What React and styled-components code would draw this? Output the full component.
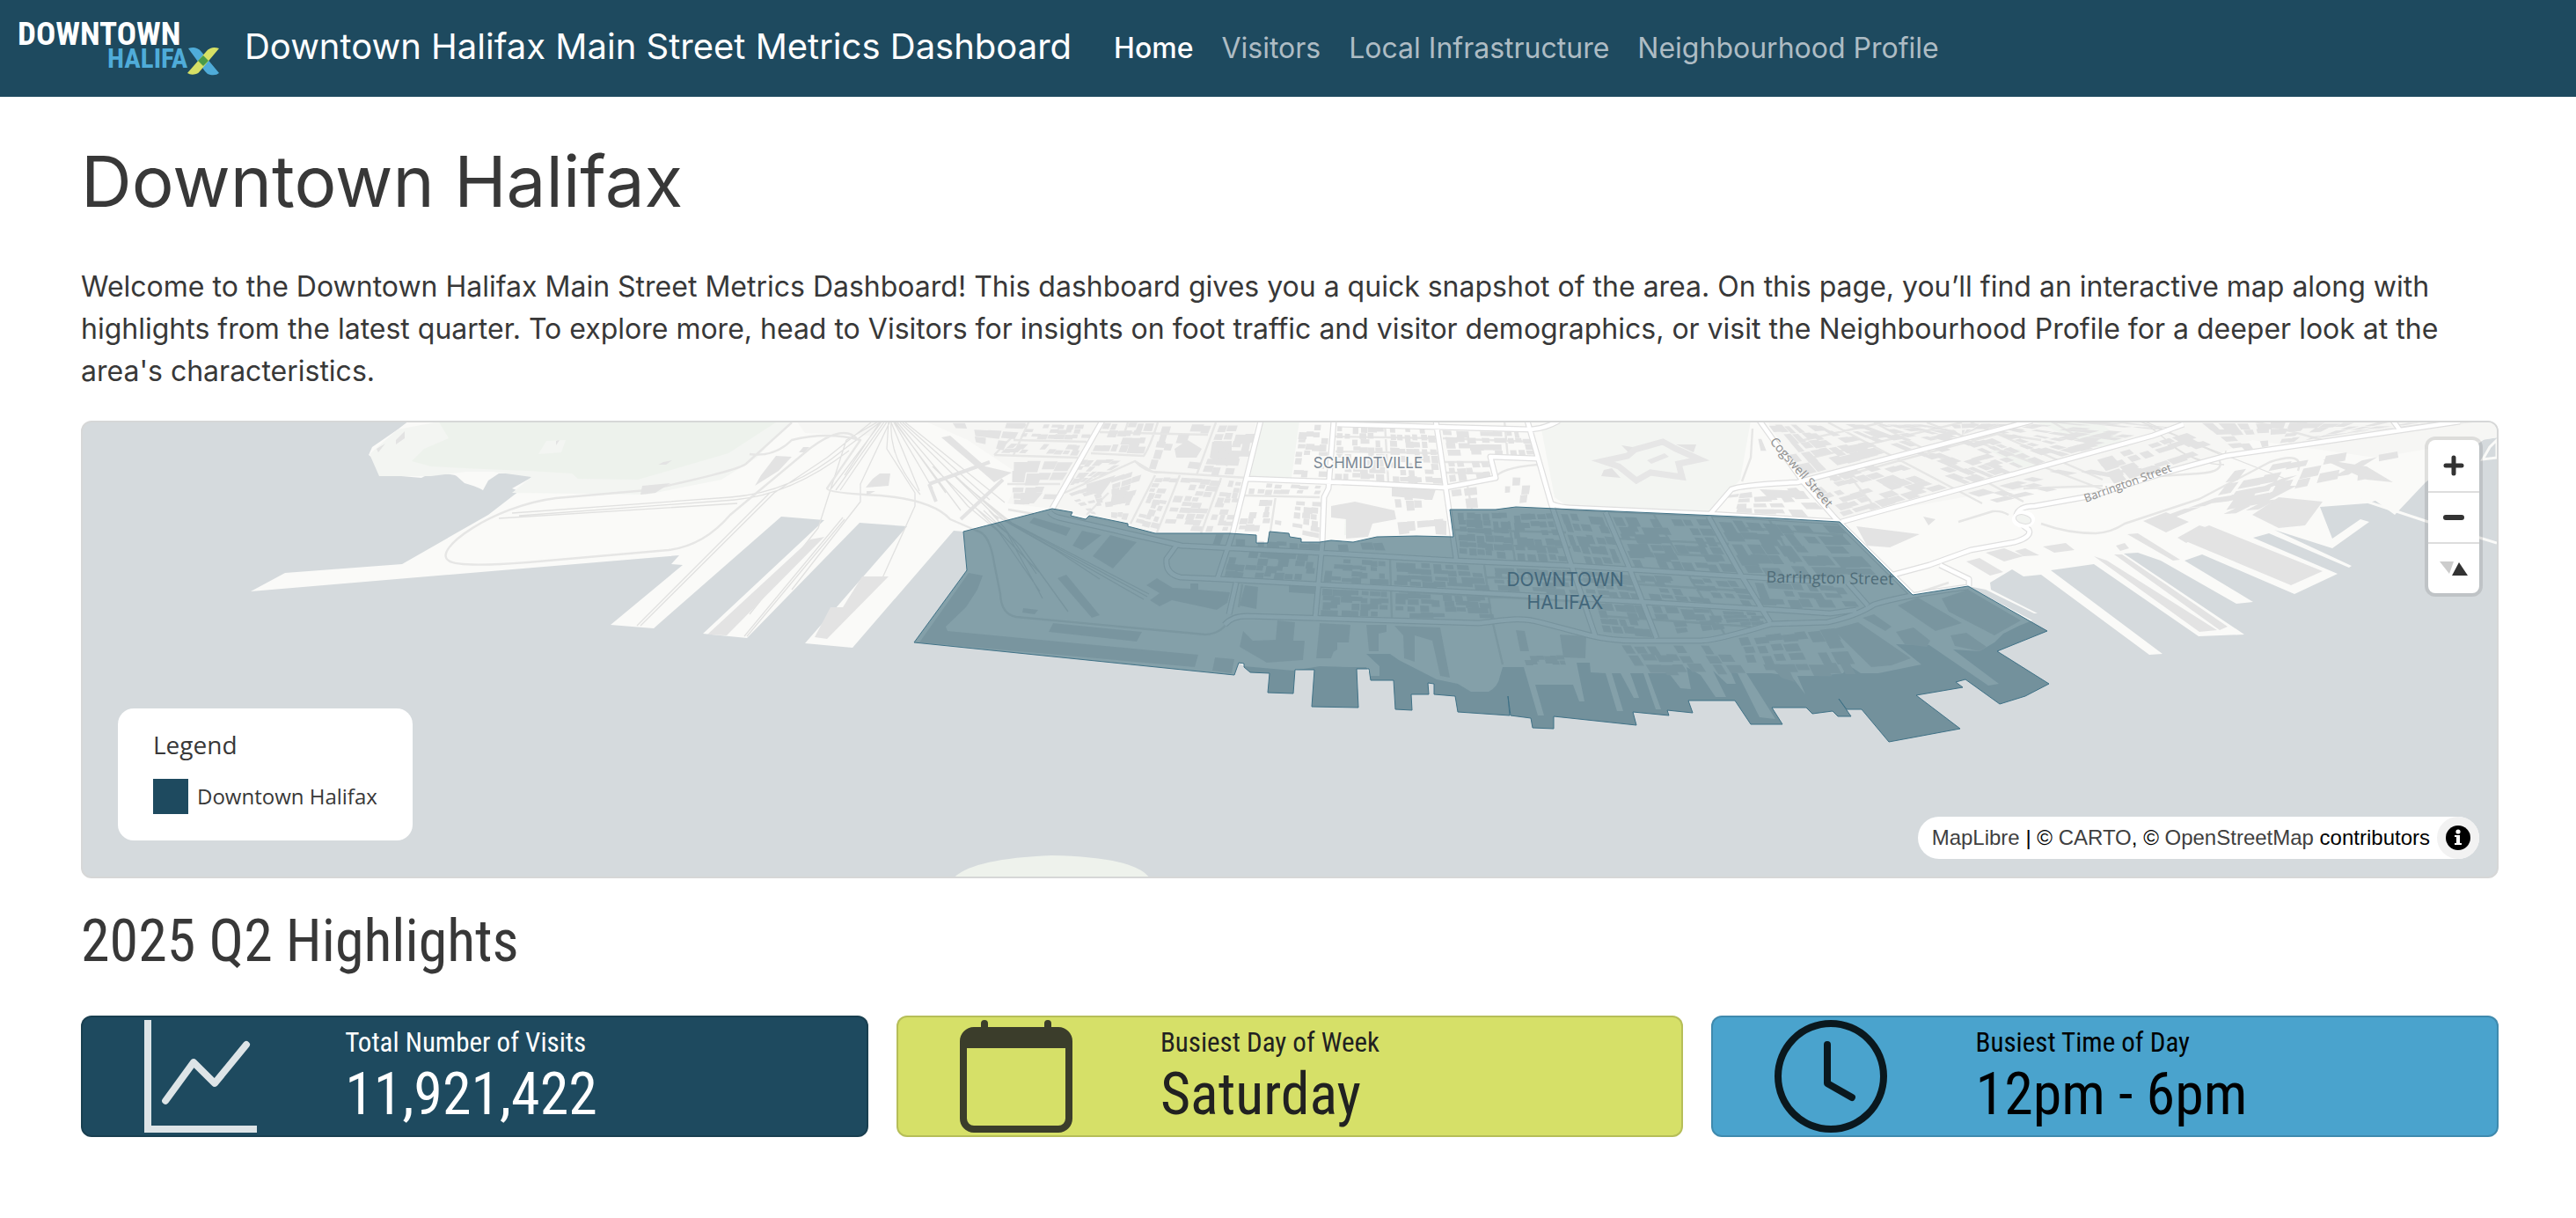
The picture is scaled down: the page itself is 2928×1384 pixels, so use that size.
import React from 'react';
import styled, { createGlobalStyle } from 'styled-components';
import { BsGraphUp, BsCalendar, BsClock } from 'react-icons/bs';

const GlobalStyle = createGlobalStyle`
  * {
    box-sizing: border-box;
  }
  body {
    margin: 0;
    background-color: #fff;
    color: #383838;
    font-family: Inter, sans-serif;
    font-size: 32px;
    line-height: 48px;
  }
`;

const Navbar = styled.header`
  display: flex;
  align-items: center;
  height: 110px;
  padding: 0 20px;
  background-color: #1e4a5f;
`;
const LogoLink = styled.a`
  display: flex;
  margin-right: 28px;
`;
const Brand = styled.a`
  margin-right: 48px;
  padding-bottom: 4px;
  color: #fff;
  font-size: 40px;
  text-decoration: none;
  white-space: nowrap;
`;
const NavLinks = styled.nav`
  display: flex;
  gap: 32px;
`;
const NavLink = styled.a`
  color: ${props => (props.$active ? '#fff' : '#aebcc4')};
  font-weight: ${props => (props.$active ? 500 : 400)};
  text-decoration: none;
  white-space: nowrap;
`;

const Page = styled.main`
  padding: 0 88px 0 92px;
`;
const Title = styled.h1`
  margin: 0;
  padding: 48px 0;
  font-size: 80px;
  font-weight: 400;
  line-height: 96px;
`;
const Intro = styled.p`
  margin: 0 0 32px;
`;
const IntroLink = styled.a`
  color: inherit;
  text-decoration: none;
`;

const MapFrame = styled.section`
  position: relative;
  height: 520px;
  overflow: hidden;
  border: 2px solid #d6d7d7;
  border-radius: 12px;
  background-color: #d5dadd;
`;
const MapCanvas = styled.svg`
  display: block;
  width: 100%;
  height: 100%;
`;
const Legend = styled.div`
  position: absolute;
  left: 40px;
  bottom: 41px;
  padding: 22px 40px 30px;
  border-radius: 18px;
  background-color: #fff;
  font-family: 'Open Sans', sans-serif;
`;
const LegendTitle = styled.div`
  margin-bottom: 20px;
  font-size: 28px;
  line-height: 38px;
`;
const LegendItem = styled.div`
  display: flex;
  align-items: center;
  gap: 10px;
  font-size: 24px;
  line-height: 40px;
`;
const Swatch = styled.span`
  width: 40px;
  height: 40px;
  background-color: #1e4a5f;
`;
const MapControls = styled.div`
  position: absolute;
  top: 20px;
  right: 20px;
  overflow: hidden;
  border-radius: 8px;
  background-color: #fff;
  box-shadow: 0 0 0 4px rgba(0, 0, 0, 0.1);
`;
const MapButton = styled.button`
  display: flex;
  align-items: center;
  justify-content: center;
  width: 58px;
  height: 58px;
  padding: 0;
  border: 0;
  background: none;
  & + & {
    border-top: 2px solid #ddd;
  }
`;
const Attribution = styled.div`
  position: absolute;
  right: 20px;
  bottom: 20px;
  display: flex;
  align-items: center;
  gap: 8px;
  height: 48px;
  padding-left: 16px;
  border-radius: 24px;
  background-color: #fff;
  color: #000;
  font-family: 'Liberation Sans', sans-serif;
  font-size: 24px;
  line-height: 40px;
`;
const AttributionLink = styled.a`
  color: #404040;
  text-decoration: none;
`;
const InfoButton = styled.button`
  display: flex;
  align-items: center;
  justify-content: center;
  width: 48px;
  height: 48px;
  padding: 0;
  border: 0;
  border-radius: 24px;
  background-color: #f2f2f2;
`;

const SectionTitle = styled.h2`
  margin: 0;
  padding: 32px 0 44px;
  font-family: 'Roboto Condensed', Roboto, sans-serif;
  font-size: 66px;
  font-weight: 400;
  line-height: 80px;
`;
const Cards = styled.section`
  display: grid;
  grid-template-columns: repeat(3, 1fr);
  gap: 32px;
  padding-bottom: 88px;
`;
const Card = styled.article`
  display: grid;
  grid-template-columns: 1fr 2fr;
  column-gap: 2px;
  align-items: center;
  height: 138px;
  border: 2px solid rgba(0, 0, 0, 0.15);
  border-radius: 12px;
  background-color: ${props => props.$bg};
  color: ${props => props.$color};
  font-family: 'Roboto Condensed', Roboto, sans-serif;
`;
const CardIcon = styled.div`
  display: flex;
  padding-left: 70px;
  opacity: 0.85;
`;
const CardLabel = styled.div`
  font-size: 31px;
  line-height: 42px;
`;
const CardValue = styled.div`
  font-size: 66px;
  line-height: 76px;
`;

// ---- map data ----

const LAND =
  'M465 478L452 488L423 508L419 517L431 526V541L456 541L479 543Q485 539 497 539Q514 538 519 541L528 549Q540 552 549 557L555 546L567 538H597L605 542L582 555L590 558L555 585L457 641L324 651L285 672L772 631L763 641L776 642L694 710L743 714L888 587L937 591L799 720L849 725L977 594L1031 598L915 731L969 736L1084 603L1095 604L1099 648L1039 730L1403 767L1408 753L1414 757L1470 762L1500 757L1533 758L1553 758L1558 768L1568 768V757L1553 743H1580L1590 750L1633 772L1657 777L1672 786H1692Q1703 780 1705 768L1708 758H1732L1748 813H1755L1745 778H1788L1795 797H1801L1792 753H1807L1808 764L1825 765L1838 808H1845L1832 765H1842L1857 793H1863L1853 765H1868L1882 806H1888L1873 765H1897L1910 782L1922 783L1917 758L1933 767L1950 792H1962L1947 762L1963 777H1973L1967 763L1975 765L2000 815L2018 817L1985 765L2013 765L2036 768L2052 789L2043 768L2067 768L2095 765L2100 755L2115 765H2135L2184 755L2155 732L2193 733L2260 779L2272 777L2220 738L2250 740L2267 730L2277 720L2295 711L2310 705L2237 666L2257 670L2312 697H2316L2263 670L2262 662L2287 647L2300 655L2320 653L2443 744L2458 743L2331 648L2380 641L2499 723L2551 721L2414 629L2430 628L2456 637L2542 686L2561 684L2483 637L2503 630L2608 675L2657 652L2561 611L2579 606L2670 645L2673 643L2585 602L2651 623L2693 593L2683 590L2651 612L2637 576L2690 572L2700 569L2722 585L2757 548L2824 499L2840 497V478Z';

const DISTRICT =
  'M1095 604L1196 578L1219 582L1217 586L1234 590L1238 586L1282 595V598L1313 606H1398L1428 608V617H1441L1443 604L1465 606L1466 610L1479 612V616H1500L1513 614L1538 616L1565 610L1610 609L1652 610L1648 579H1700L1723 576L2020 589L2091 593L2174 676L2237 666L2327 717L2270 740L2329 777L2302 791L2273 800L2234 772L2223 775L2231 781L2178 790L2228 828L2147 843L2116 806H2099L2090 794L2104 814H2089L2083 808L2060 811L2053 804H2014L2026 823H1990L1972 796H1919L1924 810L1895 807L1897 813L1856 809L1860 824L1766 814V828L1742 827L1740 816L1717 813L1714 791L1716 813L1657 809L1654 791L1630 789V777L1623 776L1624 789H1604L1605 807L1586 806L1584 773H1558L1556 760H1542L1544 804L1491 803L1494 761H1472L1470 788L1441 787L1443 765L1421 764L1414 758V754L1408 753L1403 767L1039 730L1099 648Z';

const RESIDENTIAL = [
  'M1020 480L1130 478H1428L1400 606H1313L1196 578L1145 572L1160 540L1100 500L1050 478Z',
  'M2010 480H2840V497L2700 520L2560 500L2450 545L2260 560L2090 590L2050 548Z',
  'M905 478H1000L990 495L915 492Z',
];
const PARKS = [
  { d: 'M505 478H900L860 520L820 545L735 562L582 560L604 542L560 536H530L490 541L431 541L420 516L452 488Z', fill: '#f3f5f2' },
  { d: 'M498 478H885L828 515L725 545L657 544L650 538L600 535L550 533L490 530L468 524L482 510L510 498Z', fill: '#edf2ec' },
  { d: 'M621 501L643 500L638 514L612 516Z', fill: '#f3f5f2' },
  { d: 'M1752 488L1780 478H1990L1978 545L1942 583L1783 576L1767 565Z', fill: '#f3f5f2' },
  { d: 'M1434 478H1477L1468 543H1420Z', fill: '#f2f5f1' },
  { d: 'M1529 587H1553L1553 608H1528Z', fill: '#f2f5f1' },
  { d: 'M2310 478H2385L2420 508H2380Z', fill: '#f1f4f0' },
  { d: 'M2262 512L2295 510L2318 528L2296 532Z', fill: '#f1f4f0' },
  { d: 'M1082 1000Q1100 976 1195 972Q1295 974 1308 1000Z', fill: '#eef2ec' },
];

const MAJOR_ROADS = [
  'M1253 478L1196 578',
  'M1433 478L1401 606L1384 657',
  'M1516 478L1510 555L1505 565L1503 617L1495 702',
  'M1632 478L1643 552L1655 635',
  'M1736 478L1763 572L1787 645L1813 722',
  'M1418 544L1550 549L1643 554L1700 543L1694 519L1747 521',
  'M1520 482L1740 488Q1756 487 1772 478',
  'M1763 572Q1770 576 1785 577L1942 584L2091 593',
  'M1193 582Q1196 586 1203 588L1330 617L1343 620L1500 628L1653 637L1790 643L1980 655L2070 661',
  'M1337 620L1326 635Q1324 652 1342 656L1387 658L1497 664L1707 675L1867 684L2020 693L2080 697L2110 693',
  'M1392 710Q1400 700 1417 700L1550 704L1680 708C1705 706 1725 700 1750 707L1807 722Q1830 728 1860 728H1933Q1950 728 2013 709L2077 707Q2110 700 2130 687Q2160 677 2237 667',
  'M1405 662L1397 698',
  'M1825 582L1853 648L1883 725',
  'M1942 587L1980 655L2012 707',
  'M2100 662L2123 688',
  'M2000 478L2050 548L2087 590L2175 677',
  'M1943 585L1968 556Q1978 551 2043 548L2310 478',
  'M2093 593L2230 555L2447 495L2482 482',
  'M2152 653L2193 642L2240 625L2290 616Q2310 610 2306 602Q2295 595 2292 585Q2295 575 2313 575L2380 563L2457 538L2530 518L2640 502L2796 479',
  'M2205 642L2238 658V666',
  'M2720 478L2728 489',
];
const MINOR_ROADS = [
  'M1152 517L1170 478M1130 517L1225 520M1152 500L1235 502M1130 517L1152 495M1250 491L1373 494M1240 515L1300 518Q1306 510 1316 480M1210 560L1290 524L1310 536L1418 543M1290 524Q1300 535 1315 537M1360 540L1382 480M1313 540L1285 595M1341 540L1315 605M1388 543L1365 606M1282 480L1278 492M1415 563L1500 565M1450 564L1444 604M1145 550H1205M1146 579L1175 584M1235 585L1260 560',
  'M1518 496L1634 498M1574 480L1578 548M1518 513L1636 515M1640 525L1694 525M1710 478L1714 521M1640 537L1694 538M1668 552L1673 578M1700 543Q1704 532 1747 528M1640 498L1742 502',
  'M1412 664L1408 690M1580 635L1582 702M1687 642L1695 700L1708 755M1715 592L1722 637M1652 602L1780 605M1718 620L1785 622M1880 585L1907 630L1950 632M1920 655L1960 720M1838 612L1965 618M1690 656L1870 661M1800 660L1990 672M1590 672L1800 684M1822 700L1990 712M1985 600L2095 608M2010 589L2040 640',
  'M1992 487L1990 520L1980 547M2050 500L2140 480M2060 520L2230 480M2130 480L2300 570M2190 480L2400 560M2078 480L2253 572M2100 538L2130 575M2080 545L2270 493L2320 500M2240 480L2390 545M2300 555L2390 552M2330 478L2360 495',
  'M2226 593L2265 581Q2275 580 2283 585M2320 595Q2350 606 2382 606Q2400 605 2415 595L2500 567L2580 525Q2620 512 2612 535M2560 478L2640 500M2455 541L2500 538Q2530 536 2522 522M2176 675L2215 662',
  'M900 480L848 527Q838 535 735 557L632 566C560 575 490 625 510 637Q520 645 600 639L760 625Q800 620 830 585L920 510Q960 480 975 500',
  'M852 516Q880 520 900 500Q940 490 978 500L940 555Q940 560 1000 563Q1060 568 1080 590L1110 603Q1125 606 1130 640L1137 675Q1138 698 1155 701L1370 721Q1388 720 1396 706',
];
const TRACKS = [
  'M582 583L830 565Q900 560 960 510L1000 480M590 586L835 568Q900 562 965 512M567 589L838 572M728 711L880 560L940 520L990 480M724 711L875 560M849 723L960 590M846 723L958 588M852 698L930 600L962 500L1000 478',
  'M1003 478L945 555M1006 478L950 557M1009 478L955 557M1012 478L978 550V570L900 670M1000 480L960 540M1010 478L1008 510L1040 560V575L1002 659M1013 480Q1010 520 1046 562',
  'M1013 480L1045 558M1016 480L1060 555M1018 480L1075 560M1020 480L1100 575M1023 480L1135 590M1026 480L1125 568M1029 480L1142 571M1017 480L1092 580',
  'M1085 540L1140 590L1300 681M1090 545L1145 592L1304 678M1095 550L1150 594L1306 675M1100 575L1135 604L1182 672M1110 578L1145 606L1185 680M1118 580L1160 620L1214 695M1124 580L1142 600L1178 652M1130 585L1200 625L1250 658M1060 530L1112 580L1181 650',
  'M2430 478L2600 545M2436 478L2520 515Q2530 520 2530 512M2440 482L2475 510Q2500 528 2528 528M2464 498Q2470 515 2510 525',
];

const BUILDINGS =
  'M1101 651L1117 654L1111 670L1098 690L1075 712L1077 717L1362 744L1358 758L1045 730ZM1197 708L1298 718L1292 729L1192 718ZM1202 657L1212 653L1250 699L1241 702ZM1262 608L1292 616L1265 646L1242 632ZM1230 603L1252 608L1230 625L1219 620ZM1175 588L1217 600L1212 609L1170 594ZM1303 665L1315 657L1333 668L1353 669V663L1362 663V670L1398 673L1395 685L1383 693L1332 682L1318 689L1307 682L1318 674ZM1415 665L1430 667L1428 692L1409 688ZM1163 691L1180 693L1176 698L1162 696ZM1381 747L1403 749L1400 765L1378 762Z' +
  'M1413 717L1424 728L1450 727L1452 705L1472 707L1470 728L1483 728L1481 750L1440 753L1409 735ZM1500 708L1535 710L1533 730L1520 730L1513 748L1496 748ZM1465 664H1495V675L1465 673ZM1553 710H1576V718L1567 720V740H1556ZM1585 711L1637 713L1648 770L1637 768L1628 728L1608 722V752L1596 748L1595 722ZM1723 716L1733 717L1738 740H1728ZM1773 721L1803 723L1802 748L1777 747ZM1500 709L1520 710V738L1505 748H1500Z' +
  'M2083 715L2112 707L2172 748L2150 756L2127 758ZM2157 688L2180 679L2230 708L2200 717ZM2207 680L2237 670L2297 705L2267 722L2215 695ZM2117 702L2130 698L2150 712L2143 717ZM2155 718L2175 713L2194 728L2190 735L2165 732ZM2217 722L2235 719L2258 735L2250 740L2222 734ZM2013 757L2032 757L2040 775L2025 770Z' +
  'M2110 598L2182 607L2148 622L2122 620ZM2186 587L2200 590L2192 597ZM2235 638L2250 634L2277 650L2262 654ZM2257 628L2278 623L2300 632L2278 638ZM2290 626L2302 623L2318 631L2300 632ZM2322 621L2348 617L2358 625L2335 628ZM2511 597L2640 649L2604 665L2475 611ZM2436 592L2462 582L2488 593L2462 605ZM2475 611L2500 597L2510 600L2485 617ZM2380 632L2395 637L2520 716L2500 718ZM2403 630L2412 630L2532 712L2523 716ZM2418 607L2430 606L2478 636L2470 637ZM2405 620L2415 617L2420 623L2410 626ZM2560 585L2590 565L2640 570L2620 597L2590 600ZM2640 522L2690 530L2720 548L2690 545Z' +
  'M921 613L937 610L826 722L804 721ZM980 655L1010 655L940 726L926 724L944 690L958 690ZM882 518L900 519L885 535L858 552L865 540ZM730 552L762 549L745 560L728 562ZM754 525L764 523L757 528H748ZM428 510L438 504L430 514ZM450 500L460 490V498L450 505ZM632 501L636 500L632 506ZM913 508L920 508L914 514H908ZM1000 538H1012L1010 552L984 554L992 544ZM985 558H995L985 563Z' +
  'M1070 497L1080 495L1120 530L1150 537L1130 548L1115 535ZM1335 510L1350 500L1366 510L1360 520L1337 520ZM1378 502L1400 501V512L1395 530L1375 520ZM1235 550L1268 540L1252 562L1235 560ZM1265 555L1290 560L1285 570L1262 575ZM1160 560L1185 560L1175 572H1160ZM1513 575L1540 570L1585 580L1587 590L1560 595L1555 610L1530 612V590L1513 588ZM1582 553L1632 556L1628 568L1582 564ZM1630 590L1644 592V608L1632 607Z' +
  'M1843 506L1862 509L1852 515ZM1905 505L1928 505L1925 514ZM1823 534L1832 532L1842 543L1820 541ZM2000 556L2050 558L2055 565L2010 566Z';

// the star-shaped citadel
const FORT = 'M1822 524L1850 518L1858 511L1890 502L1905 510L1932 522L1908 527L1912 542L1876 537L1860 546L1840 530Z';

// [four corners, columns, rows, fill ratio]
const BLOCKS = [
  [[1082, 480, 1160, 480, 1145, 510, 1095, 500], 4, 3, 0.6],
  [[1158, 482, 1240, 482, 1236, 499, 1150, 497], 9, 3, 0.7],
  [[1150, 503, 1232, 505, 1226, 517, 1136, 515], 9, 2, 0.75],
  [[1256, 480, 1310, 480, 1300, 514, 1240, 512], 6, 4, 0.65],
  [[1320, 482, 1378, 482, 1358, 536, 1306, 530], 5, 5, 0.45],
  [[1386, 482, 1426, 482, 1414, 540, 1364, 538], 4, 6, 0.65],
  [[1226, 522, 1285, 522, 1240, 548, 1212, 550], 6, 4, 0.7],
  [[1150, 522, 1218, 522, 1202, 548, 1150, 548], 4, 2, 0.6],
  [[1150, 553, 1203, 553, 1190, 576, 1150, 574], 4, 3, 0.55],
  [[1212, 562, 1300, 530, 1280, 590, 1240, 584], 7, 7, 0.6],
  [[1313, 542, 1338, 542, 1314, 600, 1290, 594], 3, 9, 0.65],
  [[1343, 542, 1385, 545, 1362, 604, 1320, 602], 4, 9, 0.7],
  [[1390, 545, 1412, 547, 1398, 604, 1370, 604], 3, 9, 0.7],
  [[1420, 548, 1505, 552, 1500, 562, 1418, 561], 9, 2, 0.75],
  [[1416, 567, 1446, 567, 1440, 603, 1406, 603], 4, 5, 0.7],
  [[1452, 567, 1500, 569, 1498, 613, 1448, 602], 5, 6, 0.55],
  [[1478, 482, 1510, 482, 1506, 542, 1468, 541], 4, 8, 0.55],
  [[1520, 484, 1570, 484, 1573, 545, 1517, 544], 6, 8, 0.65],
  [[1578, 484, 1630, 486, 1638, 549, 1582, 548], 6, 8, 0.65],
  [[1638, 488, 1708, 490, 1710, 518, 1643, 518], 5, 4, 0.85],
  [[1712, 490, 1736, 490, 1744, 518, 1715, 518], 3, 4, 0.7],
  [[1644, 522, 1690, 524, 1696, 541, 1648, 549], 5, 3, 0.8],
  [[1648, 556, 1690, 550, 1692, 575, 1652, 577], 3, 2, 0.7],
  [[1700, 530, 1740, 532, 1735, 570, 1700, 574], 4, 4, 0.35],
  [[1582, 552, 1638, 556, 1640, 600, 1590, 606], 5, 4, 0.4],
  [[1965, 562, 2040, 552, 2076, 586, 1950, 582], 6, 4, 0.6],
  [[1992, 498, 2008, 498, 2042, 542, 1986, 542], 3, 3, 0.45],
  [[2008, 482, 2078, 482, 2145, 514, 2050, 538], 8, 5, 0.75],
  [[2086, 482, 2180, 482, 2240, 492, 2152, 512], 10, 4, 0.7],
  [[2190, 482, 2300, 480, 2240, 492, 2225, 494], 9, 2, 0.7],
  [[2055, 548, 2148, 522, 2222, 552, 2096, 588], 9, 6, 0.65],
  [[2152, 518, 2250, 492, 2320, 524, 2232, 551], 10, 6, 0.6],
  [[2255, 492, 2310, 482, 2440, 492, 2330, 522], 10, 6, 0.65],
  [[2310, 478, 2425, 480, 2470, 484, 2440, 492], 7, 3, 0.4],
  [[2236, 560, 2370, 524, 2440, 535, 2270, 572], 9, 3, 0.55],
  [[2380, 522, 2480, 492, 2520, 512, 2400, 550], 7, 4, 0.55],
  [[2500, 480, 2820, 480, 2700, 488, 2540, 512], 16, 4, 0.55],
  [[2540, 535, 2740, 500, 2750, 535, 2500, 585], 10, 4, 0.3],
  [[2560, 550, 2700, 520, 2600, 580, 2450, 590], 8, 3, 0.3],
  // inside the district
  [[1656, 582, 1712, 582, 1720, 635, 1658, 630], 6, 6, 0.8],
  [[1718, 584, 1765, 582, 1784, 640, 1724, 636], 5, 6, 0.9],
  [[1772, 582, 1822, 586, 1846, 645, 1792, 640], 5, 5, 0.95],
  [[1832, 587, 1938, 590, 1972, 650, 1858, 645], 8, 6, 0.85],
  [[1948, 590, 2085, 597, 2140, 655, 1985, 655], 8, 5, 0.9],
  [[1506, 618, 1570, 614, 1575, 626, 1506, 625], 5, 1, 0.6],
  [[1404, 612, 1498, 618, 1498, 625, 1404, 620], 8, 1, 0.9],
  [[1348, 606, 1394, 606, 1390, 617, 1346, 615], 4, 1, 0.7],
  [[1398, 625, 1496, 630, 1492, 660, 1390, 655], 9, 4, 0.75],
  [[1506, 633, 1576, 637, 1577, 664, 1502, 661], 7, 4, 0.75],
  [[1584, 638, 1684, 643, 1690, 670, 1584, 665], 7, 4, 0.9],
  [[1502, 668, 1578, 672, 1578, 701, 1500, 700], 7, 4, 0.8],
  [[1586, 672, 1690, 677, 1696, 704, 1586, 702], 8, 4, 0.85],
  [[1696, 644, 1786, 648, 1796, 676, 1700, 671], 7, 4, 0.75],
  [[1796, 648, 1850, 652, 1864, 680, 1804, 676], 5, 4, 0.85],
  [[1862, 652, 1976, 660, 1996, 690, 1874, 680], 8, 4, 0.8],
  [[1812, 684, 1866, 688, 1880, 722, 1822, 718], 5, 4, 0.9],
  [[1876, 688, 2000, 696, 2005, 708, 1890, 724], 8, 4, 0.75],
  [[1990, 660, 2095, 666, 2112, 690, 2000, 688], 7, 3, 0.75],
  [[1840, 732, 1960, 733, 1980, 764, 1860, 764], 8, 3, 0.75],
  [[1975, 725, 2080, 712, 2110, 765, 1990, 764], 7, 4, 0.7],
  [[1730, 744, 1776, 744, 1780, 756, 1734, 756], 6, 2, 0.4],
];

const random = seed => () => {
  seed = (seed * 16807) % 2147483647;
  return seed / 2147483647;
};

// fill a four-cornered block with small, uneven footprints
const footprints = ([corners, cols, rows, fill], index) => {
  const next = random(index * 7919 + 31);
  const [ax, ay, bx, by, cx, cy, dx, dy] = corners;
  const at = (u, v) => {
    const x = (ax * (1 - u) + bx * u) * (1 - v) + (dx * (1 - u) + cx * u) * v;
    const y = (ay * (1 - u) + by * u) * (1 - v) + (dy * (1 - u) + cy * u) * v;
    return `${x.toFixed(1)} ${y.toFixed(1)}`;
  };
  let d = '';
  for (let r = 0; r < rows; r += 1) {
    for (let c = 0; c < cols; c += 1) {
      const keep = next();
      const l = (c + next() * 0.25) / cols;
      const t = (r + next() * 0.25) / rows;
      const w = (0.6 + next() * 0.6) / cols;
      const h = (0.6 + next() * 0.5) / rows;
      if (keep < fill) {
        d += `M${at(l, t)}L${at(l + w, t)}L${at(l + w, t + h)}L${at(l, t + h)}Z`;
      }
    }
  }
  return d;
};

const BLOCK_PATH = BLOCKS.map(footprints).join('');

const Logo = () => (
  <svg width="230" height="90" viewBox="19 11 230 90" role="img" aria-label="Downtown Halifax">
    <g fontFamily="'Roboto Condensed', Roboto, sans-serif" fontWeight="700">
      <text x="19" y="52" fontSize="37" fill="#fff">
        DOWNTOWN
      </text>
      <text x="121" y="78" fontSize="31" fill="#4facd9">
        HALIFA
      </text>
    </g>
    <path d="M213 56Q219 54 223 56Q226 57 228 60L248 84Q245 87 238 86Q234 85 232 82Z" fill="#4facd9" />
    <path d="M248 56Q242 54 238 56Q235 57 233 60L212 84Q216 87 222 85Q225 84 227 81Z" fill="#d6e065" />
    <path d="M230 64L236 70L230 76L224 70Z" fill="#4a9a48" />
  </svg>
);

const DistrictMap = () => (
  <MapCanvas viewBox="94 480 2744 516" preserveAspectRatio="xMidYMid slice" role="img" aria-label="Map of Downtown Halifax">
    <path d={LAND} fill="#fafaf8" />
    {RESIDENTIAL.map(d => (
      <path key={d} d={d} fill="#f6f6f4" />
    ))}
    {PARKS.map(({ d, fill }) => (
      <path key={d} d={d} fill={fill} />
    ))}
    <path d="M2822 522L2830 508L2838 500V520ZM2600 540L2757 592L2838 617" fill="none" stroke="#fafaf8" strokeWidth="3" />
    <g fill="none" strokeLinejoin="round">
      <path d={TRACKS.join('')} stroke="#e1e1e0" strokeWidth="1.3" />
      <path d={MINOR_ROADS.join('')} stroke="#e6e6e5" strokeWidth="2.4" />
    </g>
    <path d={BUILDINGS} fill="#e3e3e3" />
    <path d={BLOCK_PATH} fill="#e3e3e3" />
    <path d="M1056 550L1125 525M1056 550L1064 570M1092 590L1140 545" fill="none" stroke="#e3e3e3" strokeWidth="4" />
    <path d={FORT} fill="none" stroke="#e6e6e6" strokeWidth="7" />
    <path d="M1872 523L1892 515L1897 519L1877 527Z" fill="#e6e6e6" />
    <g fill="none" strokeLinejoin="round">
      <path d={MAJOR_ROADS.join('')} stroke="#dfdfdf" strokeWidth="7" />
      <path d={MAJOR_ROADS.join('')} stroke="#fff" strokeWidth="4.6" />
    </g>
    <ellipse cx="2300" cy="590" rx="13" ry="10" fill="#fff" />
    <ellipse cx="2300" cy="590" rx="9" ry="5" fill="#f2f4f1" stroke="#dfdfdf" transform="rotate(15 2300 590)" />
    <path d={DISTRICT} fill="#1f5465" fillOpacity="0.54" stroke="#3f7186" strokeWidth="1" />
    <g fontFamily="Inter, sans-serif" textAnchor="middle">
      <text x="1555" y="532" fontSize="17" fill="#7b8895" stroke="#fafaf8" strokeWidth="3" paintOrder="stroke">
        SCHMIDTVILLE
      </text>
      <g fontSize="21" fill="#42667a">
        <text x="1779" y="666">
          DOWNTOWN
        </text>
        <text x="1779" y="692">
          HALIFAX
        </text>
      </g>
      <g fontFamily="'Open Sans', sans-serif" fill="#8e8e8e">
        <text fontSize="14" transform="translate(2044 540) rotate(49)">
          Cogswell Street
        </text>
        <text fontSize="13" transform="translate(2420 553) rotate(-20)">
          Barrington Street
        </text>
        <text fontSize="18" fill="#4f6c78" transform="translate(2080 663) rotate(1)">
          Barrington Street
        </text>
      </g>
    </g>
  </MapCanvas>
);

const STATS = [
  { icon: BsGraphUp, label: 'Total Number of Visits', value: '11,921,422', bg: '#1e4a5f', color: '#fff' },
  { icon: BsCalendar, label: 'Busiest Day of Week', value: 'Saturday', bg: '#d6e068', color: '#212121' },
  { icon: BsClock, label: 'Busiest Time of Day', value: '12pm - 6pm', bg: '#4aa3cd', color: '#000' },
];

const App = () => (
  <>
    <GlobalStyle />
    <Navbar>
      <LogoLink href="#home">
        <Logo />
      </LogoLink>
      <Brand href="#home">Downtown Halifax Main Street Metrics Dashboard</Brand>
      <NavLinks>
        <NavLink href="#home" $active>
          Home
        </NavLink>
        <NavLink href="#visitors">Visitors</NavLink>
        <NavLink href="#infrastructure">Local Infrastructure</NavLink>
        <NavLink href="#profile">Neighbourhood Profile</NavLink>
      </NavLinks>
    </Navbar>

    <Page>
      <Title>Downtown Halifax</Title>
      <Intro>
        Welcome to the Downtown Halifax Main Street Metrics Dashboard! This dashboard gives you a quick snapshot of the
        area. On this page, you’ll find an interactive map along with highlights from the latest quarter. To explore
        more, head to <IntroLink href="#visitors">Visitors</IntroLink> for insights on foot traffic and visitor
        demographics, or visit the <IntroLink href="#profile">Neighbourhood Profile</IntroLink> for a deeper look at the
        area's characteristics.
      </Intro>

      <MapFrame>
        <DistrictMap />
        <Legend>
          <LegendTitle>Legend</LegendTitle>
          <LegendItem>
            <Swatch />
            Downtown Halifax
          </LegendItem>
        </Legend>
        <MapControls>
          <MapButton type="button" aria-label="Zoom in">
            <svg width="58" height="58" viewBox="0 0 58 58" stroke="#333" strokeWidth="5" strokeLinecap="round">
              <path d="M29 20V38M20 29H38" />
            </svg>
          </MapButton>
          <MapButton type="button" aria-label="Zoom out">
            <svg width="58" height="58" viewBox="0 0 58 58" stroke="#333" strokeWidth="6" strokeLinecap="round">
              <path d="M20 29H38" />
            </svg>
          </MapButton>
          <MapButton type="button" aria-label="Reset bearing to north">
            <svg width="58" height="58" viewBox="0 0 58 58">
              <path d="M13 21H29L24 35Z" fill="#ccc" />
              <path d="M35 22L45 37H27Z" fill="#333" />
            </svg>
          </MapButton>
        </MapControls>
        <Attribution>
          <span>
            <AttributionLink href="#maplibre">MapLibre</AttributionLink> | ©{' '}
            <AttributionLink href="#carto">CARTO</AttributionLink>, ©{' '}
            <AttributionLink href="#osm">OpenStreetMap</AttributionLink> contributors
          </span>
          <InfoButton type="button" aria-label="Toggle attribution">
            <svg width="30" height="30" viewBox="0 0 30 30">
              <circle cx="15" cy="15" r="14" fill="#000" />
              <circle cx="15" cy="8" r="2.6" fill="#fff" />
              <path d="M11 12H17V21H19V23H11V21H13V14H11Z" fill="#fff" />
            </svg>
          </InfoButton>
        </Attribution>
      </MapFrame>

      <SectionTitle>2025 Q2 Highlights</SectionTitle>
      <Cards>
        {STATS.map(({ icon: Icon, label, value, bg, color }) => (
          <Card key={label} $bg={bg} $color={color}>
            <CardIcon>
              <Icon size={128} />
            </CardIcon>
            <div>
              <CardLabel>{label}</CardLabel>
              <CardValue>{value}</CardValue>
            </div>
          </Card>
        ))}
      </Cards>
    </Page>
  </>
);

export default App;
